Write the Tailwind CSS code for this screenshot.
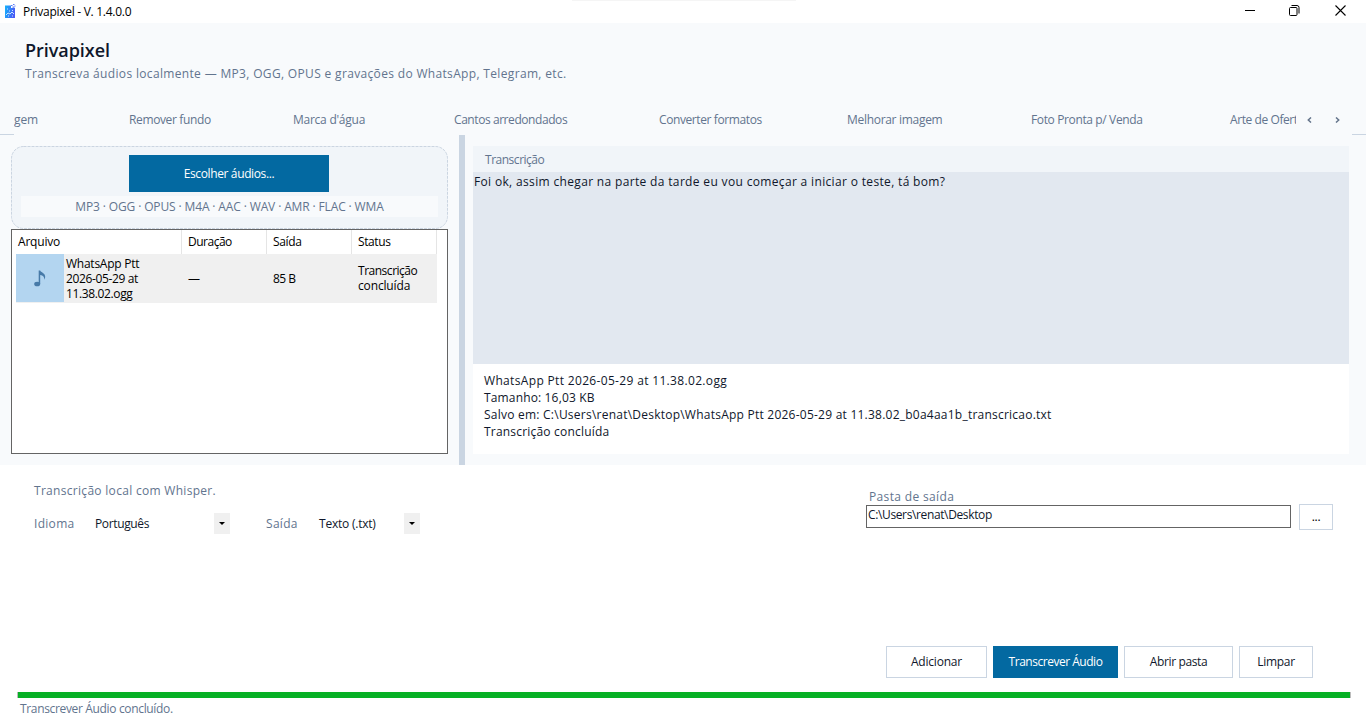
<!DOCTYPE html>
<html lang="pt-BR">
<head>
    <meta charset="UTF-8" />
    <meta name="viewport" content="width=device-width, initial-scale=1.0" />
    <title>Privapixel - V. 1.4.0.0</title>
    <script src="https://cdn.jsdelivr.net/npm/@tailwindcss/browser@4"></script>
    <style>
        body {
            font-family: "Open Sans", "Noto Sans", sans-serif;
        }
    </style>
</head>
<body class="w-[1366px] h-[717px] overflow-hidden bg-white text-[12px] leading-[16px] tracking-[-0.37px] text-black whitespace-nowrap flex flex-col">
    <!-- Title bar -->
    <header class="h-[23px] shrink-0 flex items-center pl-[5px] relative">
        <div class="absolute top-0 left-[572px] w-[224px] h-px bg-[#f5f5f5]"></div>
        <svg class="w-[11px] h-[15px] -mt-px" viewBox="0 0 11 15">
            <defs>
                <linearGradient id="logo" x1="0" y1="0" x2="1" y2="0.3">
                    <stop offset="0" stop-color="#12b4fb" />
                    <stop offset="1" stop-color="#4a5cf6" />
                </linearGradient>
            </defs>
            <path d="M0 1.500h6v2.500h4v10H0z" fill="url(#logo)" />
            <path d="M6 1.500h1.500M8 .5h1.500M9.500 2h1M7.500 3.200h2" stroke="#5a7af8" stroke-width="1.2" />
            <path d="M1 11l2-2 2 1 2-2 2 2M2 5h1M4 7h1M7 6.500h1M3 12h1M7 12h1" fill="none" stroke="#d9f2ff" stroke-width=".9" />
        </svg>
        <span class="ml-[7px] tracking-[-0.28px]">Privapixel - V. 1.4.0.0</span>
        <div class="ml-auto flex items-center mr-[20px] -mt-[3px]">
            <svg class="w-[11px] h-[11px]" viewBox="0 0 11 11"><path d="M1 5.500h10" stroke="#000" /></svg>
            <svg class="w-[11px] h-[11px] ml-[34px]" viewBox="0 0 11 11" fill="none" stroke="#000">
                <rect x=".5" y="2.500" width="7.500" height="8" rx="1" />
                <path d="M2.500.5h5.500a2 2 0 0 1 2 2v6" />
            </svg>
            <svg class="w-[11px] h-[11px] ml-[35px]" viewBox="0 0 11 11"><path d="M.5.5l10 10M10.500.5l-10 10" stroke="#000" stroke-width="1.100" /></svg>
        </div>
    </header>

    <!-- App heading -->
    <div class="h-[81px] shrink-0 bg-slate-50 pl-[25px] pt-[15px]">
        <h1 class="text-[18px] leading-[24px] font-semibold text-slate-900 tracking-[-0.05px]">Privapixel</h1>
        <p class="mt-[4px] text-slate-500 tracking-[0.335px]">Transcreva áudios localmente — MP3, OGG, OPUS e gravações do WhatsApp, Telegram, etc.</p>
    </div>

    <!-- Tabs -->
    <nav class="h-[31px] shrink-0 bg-slate-50 flex text-slate-500 leading-[31px]">
        <div class="w-[14px] border-b border-slate-300"></div>
        <div class="w-[1282px] flex overflow-hidden">
            <span class="w-[115px] shrink-0 tracking-[-0.1px]">gem</span>
            <span class="w-[164px] shrink-0">Remover fundo</span>
            <span class="w-[161px] shrink-0 tracking-[-0.25px]">Marca d'água</span>
            <span class="w-[205px] shrink-0 tracking-[-0.43px]">Cantos arredondados</span>
            <span class="w-[188px] shrink-0 tracking-[-0.4px]">Converter formatos</span>
            <span class="w-[184px] shrink-0 tracking-[-0.3px]">Melhorar imagem</span>
            <span class="w-[199px] shrink-0">Foto Pronta p/ Venda</span>
            <span class="w-[90px] shrink-0 tracking-[-0.42px]">Arte de Oferta</span>
        </div>
        <div class="w-[56px] flex items-center pl-[11px]">
            <svg class="w-[5px] h-[6px]" viewBox="0 0 5 6"><path d="M4 .5L1.300 3 4 5.500" fill="none" stroke="#64748b" stroke-width="1.500" /></svg>
            <svg class="w-[5px] h-[6px] ml-[23px]" viewBox="0 0 5 6"><path d="M1 .5L3.700 3 1 5.500" fill="none" stroke="#64748b" stroke-width="1.500" /></svg>
        </div>
        <div class="w-[14px] border-b border-slate-300"></div>
    </nav>

    <main class="h-[330px] shrink-0 bg-slate-50 flex">
        <!-- File list -->
        <section class="w-[459px] pl-[11px] pt-[11px]">
            <div class="relative w-[437px] h-[83px] pt-[9px] pl-[10px]">
                <svg class="absolute inset-0 w-[437px] h-[83px]" viewBox="0 0 437 83">
                    <rect x=".5" y=".5" width="436" height="82" rx="12" fill="#f1f5f9" stroke="#cbd5e1" stroke-dasharray="3 1" />
                </svg>
                <div class="relative w-[417px] flex flex-col items-center">
                    <button class="w-[200px] h-[37px] bg-[#0369a1] text-white -ml-px">Escolher áudios...</button>
                    <div class="mt-[4px] w-full h-[21px] leading-[21px] text-center tracking-[-0.13px] bg-slate-50 text-slate-500">MP3 · OGG · OPUS · M4A · AAC · WAV · AMR · FLAC · WMA</div>
                </div>
            </div>
            <div class="w-[437px] h-[225px] bg-white border border-[#646464]">
                <div class="h-[24px] leading-[24px] flex">
                    <span class="w-[170px] pl-[6px] border-r border-[#e5e5e5] tracking-[-0.2px]">Arquivo</span>
                    <span class="w-[85px] pl-[6px] border-r border-[#e5e5e5] tracking-[-0.5px]">Duração</span>
                    <span class="w-[85px] pl-[6px] border-r border-[#e5e5e5]">Saída</span>
                    <span class="w-[85px] pl-[6px] border-r border-[#e5e5e5] tracking-[-0.4px]">Status</span>
                </div>
                <div class="ml-[4px] w-[421px] h-[49px] bg-[#f0f0f0] flex items-center leading-[15px]">
                    <div class="w-[48px] h-[48px] bg-[#b3d5f0] self-start flex items-center justify-center">
                        <svg class="w-[12px] h-[17px]" viewBox="0 0 12 17">
                            <ellipse cx="3.200" cy="14" rx="3" ry="2.300" fill="#477aa8" />
                            <path d="M4.700 14V.5h1.500c.5 1.900 5.300 2.500 5 6.500-.1 1.200-.6 2.100-1.200 2.800.8-3-1-4.300-3.800-4.900V14z" fill="#477aa8" />
                        </svg>
                    </div>
                    <span class="w-[124px] pl-[2px]"><span class="tracking-[-0.25px]">WhatsApp Ptt</span><br />2026-05-29 at<br />11.38.02.ogg</span>
                    <span class="w-[85px]">—</span>
                    <span class="w-[85px] tracking-[-0.5px]">85 B</span>
                    <span class="-mt-px"><span class="tracking-[-0.48px]">Transcrição</span><br /><span class="tracking-[-0.15px]">concluída</span></span>
                </div>
            </div>
        </section>

        <div class="w-[6px] bg-slate-300"></div>

        <!-- Transcript -->
        <section class="w-[884px] pl-[8px] pt-[11px] text-slate-900">
            <div class="h-[26px] leading-[27px] pl-[12px] bg-slate-100 text-slate-500 tracking-[-0.48px]">Transcrição</div>
            <div class="h-[192px] pl-[1px] pt-[2px] bg-slate-200 tracking-[0.34px]">Foi ok, assim chegar na parte da tarde eu vou começar a iniciar o teste, tá bom?</div>
            <div class="h-[90px] pl-[11px] pt-[8px] leading-[17px] bg-white tracking-[0.235px]">
                <p class="tracking-[0.335px]">WhatsApp Ptt 2026-05-29 at 11.38.02.ogg</p>
                <p class="tracking-[0.15px]">Tamanho: 16,03 KB</p>
                <p>Salvo em: C:\Users\renat\Desktop\WhatsApp Ptt 2026-05-29 at 11.38.02_b0a4aa1b_transcricao.txt</p>
                <p class="tracking-[0.2px]">Transcrição concluída</p>
            </div>
        </section>
    </main>

    <!-- Options -->
    <section class="h-[181px] shrink-0 flex">
        <div class="w-[866px] pl-[34px] pt-[18px] text-slate-500 tracking-[0.3px]">
            <p>Transcrição local com Whisper.</p>
            <div class="mt-[14px] h-[21px] flex items-center">
                <span class="w-[61px]">Idioma</span>
                <span class="w-[119px] text-slate-900 tracking-[-0.37px]">Português</span>
                <span class="w-[16px] h-[21px] bg-[#f0f0f0] flex items-center justify-center">
                    <svg class="w-[6px] h-[3px]" viewBox="0 0 6 3"><path d="M0 0h6L3 3z" fill="#000" /></svg>
                </span>
                <span class="w-[53px] ml-[36px]">Saída</span>
                <span class="w-[85px] text-slate-900 tracking-[-0.22px]">Texto (.txt)</span>
                <span class="w-[16px] h-[21px] bg-[#f0f0f0] flex items-center justify-center">
                    <svg class="w-[6px] h-[3px]" viewBox="0 0 6 3"><path d="M0 0h6L3 3z" fill="#000" /></svg>
                </span>
            </div>
        </div>
        <div class="pt-[24px]">
            <p class="pl-[3px] h-[15px] text-slate-500 tracking-[0.35px]">Pasta de saída</p>
            <div class="flex">
                <div class="mt-px w-[425px] h-[23px] leading-[18px] pl-[1px] border border-[#646464] text-slate-900">C:\Users\renat\Desktop</div>
                <button class="ml-[8px] w-[34px] h-[26px] border border-slate-300">...</button>
            </div>
        </div>
    </section>

    <!-- Actions -->
    <div class="shrink-0 h-[32px] flex gap-[6px] justify-end pr-[53px] text-slate-900">
        <button class="w-[101px] border border-slate-300 tracking-[-0.2px]">Adicionar</button>
        <button class="w-[125px] bg-[#0369a1] text-white tracking-[-0.48px]">Transcrever Áudio</button>
        <button class="w-[109px] border border-slate-300">Abrir pasta</button>
        <button class="w-[74px] border border-slate-300 tracking-[-0.3px]">Limpar</button>
    </div>

    <!-- Progress and status -->
    <footer class="pt-[14px]">
        <div class="ml-[17px] w-[1334px] h-[6px] bg-[#06b025] border-x border-[#bcbcbc]"></div>
        <p class="mt-[3px] pl-[20px] text-slate-500 tracking-[-0.34px]">Transcrever Áudio concluído.</p>
    </footer>
</body>
</html>
